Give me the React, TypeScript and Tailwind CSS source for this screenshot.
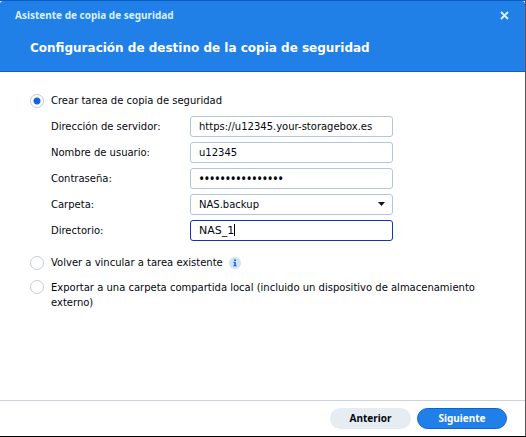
import { useState } from 'react'

const boxClass = 'h-[21px] w-full rounded-[3px] border bg-white px-2 text-[#03070f] outline-none'

const radioClass =
  'size-3.5 shrink-0 appearance-none rounded-full border border-[#c3cdd6] bg-white checked:border-[#b9cbe0] checked:bg-[radial-gradient(circle,#0f66e0_3px,#fff_4px)]'

function Field({ id, label, children }: { id: string; label: string; children: React.ReactNode }) {
  return (
    <div className="flex items-center">
      <label htmlFor={id} className="w-[139px] shrink-0">
        {label}
      </label>
      <div className="relative w-[203px]">{children}</div>
    </div>
  )
}

export default function App() {
  const [mode, setMode] = useState('create')
  const [server, setServer] = useState('https://u12345.your-storagebox.es')
  const [user, setUser] = useState('u12345')
  const [password, setPassword] = useState('1234567890123456')
  const [directory, setDirectory] = useState('NAS_1')

  return (
    <div className="flex min-h-screen flex-col border-t border-r border-b border-t-[#0b5cc4] border-r-[#555] border-b-black bg-white font-['DejaVu_Sans',Verdana,sans-serif] text-[10px] leading-[15px] text-[#03070f]">
      <header className="h-[71px] rounded-t-[3px] border-b border-[#0d5fd0] bg-[#2080e8] text-white">
        <div className="flex h-[29px] items-center justify-between pr-4 pl-[15px]">
          <span className="font-['Noto_Sans',sans-serif] font-bold text-[#d8f0ff]">
            Asistente de copia de seguridad
          </span>
          <button aria-label="Cerrar">
            <svg className="size-[9px]" viewBox="0 0 9 9" fill="none" stroke="#d8f4ff" strokeWidth="1.8">
              <path d="M1 1l7 7M8 1l-7 7" />
            </svg>
          </button>
        </div>
        <h1 className="pt-2 pl-[30px] text-[12px] leading-5 font-bold">
          Configuración de destino de la copia de seguridad
        </h1>
      </header>

      <main className="flex-1 px-[30px] pt-[21px]">
        <label className="flex items-center gap-[7px]">
          <input
            type="radio"
            name="mode"
            className={radioClass}
            checked={mode === 'create'}
            onChange={() => setMode('create')}
          />
          Crear tarea de copia de seguridad
        </label>

        <div className="mt-2 flex flex-col gap-[5px] pl-[21px]">
          <Field id="server" label="Dirección de servidor:">
            <input
              id="server"
              className={`${boxClass} border-[#b3c6dc]`}
              value={server}
              onChange={(e) => setServer(e.target.value)}
            />
          </Field>
          <Field id="user" label="Nombre de usuario:">
            <input
              id="user"
              className={`${boxClass} border-[#b3c6dc]`}
              value={user}
              onChange={(e) => setUser(e.target.value)}
            />
          </Field>
          <Field id="password" label="Contraseña:">
            <input
              id="password"
              type="password"
              className={`${boxClass} border-[#b3c6dc] font-['Noto_Sans',sans-serif] text-[14px]`}
              value={password}
              onChange={(e) => setPassword(e.target.value)}
            />
          </Field>
          <Field id="folder" label="Carpeta:">
            <select id="folder" className={`${boxClass} appearance-none border-[#b3c6dc]`}>
              <option>NAS.backup</option>
            </select>
            <svg className="pointer-events-none absolute top-2 right-2 h-1 w-[7px]" viewBox="0 0 7 4" fill="#10141c">
              <path d="M0 0h7L3.5 4z" />
            </svg>
          </Field>
          <Field id="directory" label="Directorio:">
            <input
              id="directory"
              className={`${boxClass} border-[#1034b8] text-[11px] caret-transparent`}
              value={directory}
              onChange={(e) => setDirectory(e.target.value)}
            />
            <span className="pointer-events-none absolute top-1 left-11 h-3 w-px bg-black" />
          </Field>
        </div>

        <div className="mt-3.5 flex items-center gap-1.5">
          <label className="flex items-center gap-[7px]">
            <input
              type="radio"
              name="mode"
              className={radioClass}
              checked={mode === 'relink'}
              onChange={() => setMode('relink')}
            />
            Volver a vincular a tarea existente
          </label>
          <svg className="size-3" viewBox="0 0 12 12">
            <circle cx="6" cy="6" r="6" fill="#cfe3fa" />
            <path d="M5 2.5h2v1.4H5zM4.5 5h2.3v3.3h.8v1H4.4v-1h.9V6h-.8z" fill="#1660d0" />
          </svg>
        </div>

        <label className="mt-2.5 flex gap-[7px]">
          <input
            type="radio"
            name="mode"
            className={radioClass}
            checked={mode === 'export'}
            onChange={() => setMode('export')}
          />
          Exportar a una carpeta compartida local (incluido un dispositivo de almacenamiento externo)
        </label>
      </main>

      <footer className="flex h-9 items-center justify-end gap-1.5 border-t border-[#cdd3da] pr-[18px] font-['Noto_Sans',sans-serif] font-bold">
        <button className="h-[21px] w-[81px] rounded-full bg-[#e6edf2]">Anterior</button>
        <button className="h-[21px] w-[90px] rounded-full border border-[#0d62d4] bg-[#2080e8] text-white">
          Siguiente
        </button>
      </footer>
    </div>
  )
}
